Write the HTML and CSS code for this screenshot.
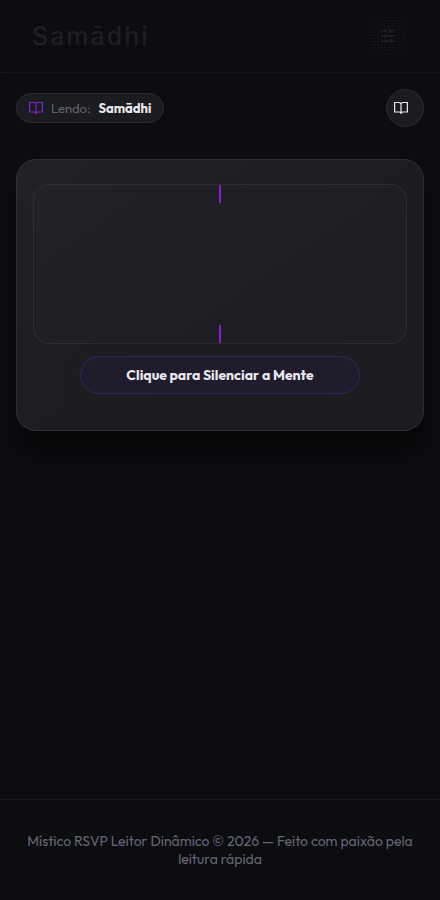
FILE: index.html
```html
<!DOCTYPE html>
<html lang="pt-BR">
<head>
<meta charset="utf-8">
<meta name="viewport" content="width=device-width, initial-scale=1">
<title>Samādhi</title>
<link rel="stylesheet" href="styles.css">
</head>
<body>
<header class="header">
  <h1 class="logo">Samādhi</h1>
  <button class="settings" type="button" aria-label="Configurações">
    <svg width="14" height="14" viewBox="0 0 14 14" fill="none" stroke="currentColor" stroke-width="1.5"><path d="M0 2h6M8 2h6M8.500 0v4M0 7h4M6 7h8M4.500 5v4M0 12h8M10 12h4M10 10v4"/></svg>
  </button>
</header>
<main class="main">
  <div class="toolbar">
    <div class="reading">
      <svg class="book" width="14" height="14" viewBox="0 0 14 14" fill="none" stroke="currentColor" stroke-width="1.2"><path d="M7 13V2.500Q6 1.500 4.500 1.500H.6v9.500H5q1.500 0 2 1 .5-1 2-1h4.400V1.500H9.500Q8 1.500 7 2.500"/></svg>
      <span class="label">Lendo:</span>
      <strong class="title">Samādhi</strong>
    </div>
    <button class="library" type="button" aria-label="Biblioteca">
      <svg width="14" height="14" viewBox="0 0 14 14" fill="none" stroke="currentColor" stroke-width="1.2"><path d="M7 13V2.500Q6 1.500 4.500 1.500H.6v9.500H5q1.500 0 2 1 .5-1 2-1h4.400V1.500H9.500Q8 1.500 7 2.500"/></svg>
    </button>
  </div>
  <section class="card">
    <div class="display">
      <span class="mark"></span>
      <span class="mark"></span>
    </div>
    <button class="start" type="button">Clique para Silenciar a Mente</button>
  </section>
</main>
<footer class="footer">
  <p>Místico RSVP Leitor Dinâmico © 2026 — Feito com paixão pela leitura rápida</p>
</footer>
</body>
</html>
```
FILE: styles.css
```css
* {
  box-sizing: border-box;
}

body {
  display: flex;
  flex-direction: column;
  min-height: 100vh;
  margin: 0;
  background: #0c0d11;
  color: #e8e8ec;
  font-family: Outfit, Lato, sans-serif;
}

button {
  padding: 0;
  font-family: inherit;
  cursor: pointer;
}

svg {
  display: block;
}

.header {
  display: flex;
  align-items: center;
  justify-content: space-between;
  height: 73px;
  padding: 0 32px;
  border-bottom: 1px dotted #1b1c20;
}

.logo {
  margin: 0;
  color: #1f1f23;
  font: 500 25px/32px Inter, sans-serif;
  letter-spacing: 2px;
}

.settings {
  display: grid;
  place-items: center;
  width: 40px;
  height: 40px;
  border: 0;
  border-radius: 50%;
  background: radial-gradient(circle, #191a1e 0 1px, transparent 1px) 0 0 / 3px 3px;
  color: #222327;
}

.main {
  flex: 1;
  padding: 16px;
}

.toolbar {
  display: flex;
  align-items: center;
  justify-content: space-between;
  margin-bottom: 32px;
}

.reading {
  display: flex;
  align-items: center;
  gap: 8px;
  height: 30px;
  padding: 0 12px;
  border: 1px solid #2c2b30;
  border-radius: 16px;
  background: #1b1c20;
  font-size: 13px;
}

.book {
  color: #7e22ce;
}

.label {
  color: #656476;
}

.title {
  font-weight: 700;
}

.library {
  display: flex;
  align-items: center;
  width: 38px;
  height: 38px;
  padding-left: 7px;
  border: 1px solid #2c2b30;
  border-radius: 50%;
  background: #1b1c20;
  color: #e8e8ec;
}

.card {
  display: flex;
  flex-direction: column;
  align-items: center;
  gap: 12px;
  padding: 24px 16px 36px;
  border: 1px solid #302e33;
  border-radius: 20px;
  background: linear-gradient(145deg, #222126, #1b1c20 60%);
  box-shadow: 0 24px 20px 0 #08080a;
}

.display {
  display: flex;
  flex-direction: column;
  align-items: center;
  justify-content: space-between;
  width: 100%;
  height: 160px;
  border: 1px solid #302e33;
  border-radius: 16px;
  background: linear-gradient(145deg, #222126, #1f1e22 60%);
}

.mark {
  width: 2px;
  height: 18px;
  background: #7e22ce;
  box-shadow: 0 0 8px #7e22ce20;
}

.start {
  width: 280px;
  max-width: 100%;
  height: 38px;
  border: 1px solid #30265e;
  border-radius: 20px;
  background: #211c2c;
  box-shadow: 0 0 8px 6px #1f1d22;
  color: #e8e8ec;
  font-size: 14px;
  font-weight: 700;
}

.footer {
  padding: 32px 24px;
  border-top: 1px solid #1b1c20;
  color: #656476;
  font-size: 14px;
  line-height: 18px;
  text-align: center;
}

.footer p {
  margin: 0;
}
```
